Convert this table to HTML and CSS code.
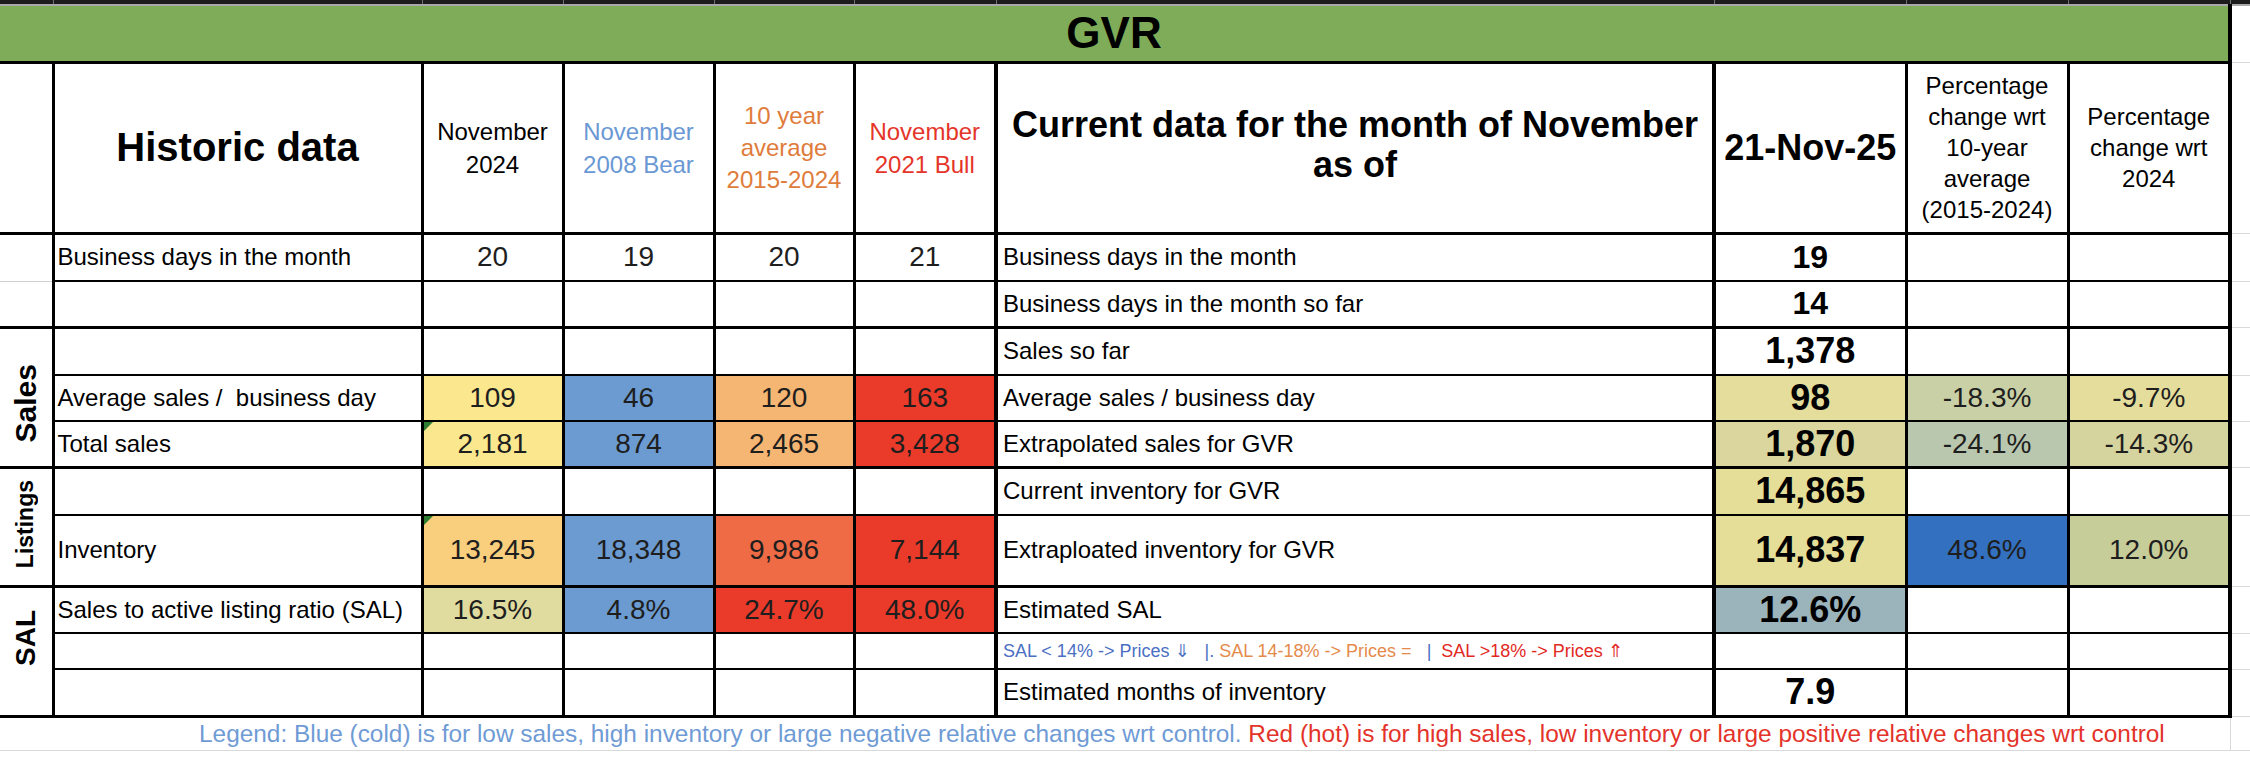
FILE: index.html
```html
<!DOCTYPE html>
<html lang="en">
<head>
<meta charset="utf-8">
<title>GVR</title>
<link rel="stylesheet" href="styles.css">
</head>
<body>
<table class="sheet">
  <colgroup>
    <col class="w0"><col class="w1"><col class="w2"><col class="w3"><col class="w4"><col class="w5"><col class="w6"><col class="w7"><col class="w8"><col class="w9"><col class="w10">
  </colgroup>
  <tr class="strip">
    <td></td><td></td><td></td><td></td><td></td><td></td><td></td><td></td><td></td><td></td><td></td>
  </tr>
  <tr class="title">
    <td colspan="10" class="gvr">GVR</td><td class="x"></td>
  </tr>
  <tr class="head">
    <td class="c"></td>
    <td class="c h-big">Historic data</td>
    <td class="c h-sm">November<br>2024</td>
    <td class="c h-sm t-blue">November<br>2008 Bear</td>
    <td class="c h-sm h-avg t-orange">10 year<br>average<br>2015-2024</td>
    <td class="c h-sm t-red sep">November<br>2021 Bull</td>
    <td class="c h-cur sep">Current data for the month of November<br>as of</td>
    <td class="c h-date">21-Nov-25</td>
    <td class="c h-pct">Percentage<br>change wrt<br>10-year<br>average<br>(2015-2024)</td>
    <td class="c h-pct last">Percentage<br>change wrt<br>2024</td>
    <td class="x"></td>
  </tr>
  <tr class="r1 thin">
    <td class="c gridb"></td>
    <td class="c lab">Business days in the month</td>
    <td class="c num">20</td>
    <td class="c num">19</td>
    <td class="c num">20</td>
    <td class="c num sep">21</td>
    <td class="c lab cur sep">Business days in the month</td>
    <td class="c val mid">19</td>
    <td class="c"></td>
    <td class="c last"></td>
    <td class="x"></td>
  </tr>
  <tr class="r2 thick">
    <td class="c"></td>
    <td class="c lab"></td>
    <td class="c"></td>
    <td class="c"></td>
    <td class="c"></td>
    <td class="c sep"></td>
    <td class="c lab cur sep">Business days in the month so far</td>
    <td class="c val mid">14</td>
    <td class="c"></td>
    <td class="c last"></td>
    <td class="x"></td>
  </tr>
  <tr class="r3 thin">
    <td class="c vlab v-sales-cell thickb" rowspan="3"><span class="v-sales">Sales</span></td>
    <td class="c lab"></td>
    <td class="c"></td>
    <td class="c"></td>
    <td class="c"></td>
    <td class="c sep"></td>
    <td class="c lab cur sep">Sales so far</td>
    <td class="c val">1,378</td>
    <td class="c"></td>
    <td class="c last"></td>
    <td class="x"></td>
  </tr>
  <tr class="r4 thin">
    <td class="c lab">Average sales /&nbsp; business day</td>
    <td class="c num bg-yellow">109</td>
    <td class="c num bg-blue">46</td>
    <td class="c num bg-orange">120</td>
    <td class="c num bg-red sep">163</td>
    <td class="c lab cur sep">Average sales / business day</td>
    <td class="c val bg-k1">98</td>
    <td class="c num bg-sage">-18.3%</td>
    <td class="c num bg-k1 last">-9.7%</td>
    <td class="x"></td>
  </tr>
  <tr class="r5 thick">
    <td class="c lab">Total sales</td>
    <td class="c num bg-yellow flag">2,181</td>
    <td class="c num bg-blue">874</td>
    <td class="c num bg-orange">2,465</td>
    <td class="c num bg-red sep">3,428</td>
    <td class="c lab cur sep">Extrapolated sales for GVR</td>
    <td class="c val bg-k2">1,870</td>
    <td class="c num bg-sage2">-24.1%</td>
    <td class="c num bg-k3 last">-14.3%</td>
    <td class="x"></td>
  </tr>
  <tr class="r6 thin">
    <td class="c vlab thickb" rowspan="2"><span class="v-list">Listings</span></td>
    <td class="c lab"></td>
    <td class="c"></td>
    <td class="c"></td>
    <td class="c"></td>
    <td class="c sep"></td>
    <td class="c lab cur sep">Current inventory for GVR</td>
    <td class="c val bg-k4">14,865</td>
    <td class="c"></td>
    <td class="c last"></td>
    <td class="x"></td>
  </tr>
  <tr class="r7 thick">
    <td class="c lab">Inventory</td>
    <td class="c num bg-lorange flag">13,245</td>
    <td class="c num bg-blue">18,348</td>
    <td class="c num bg-ored">9,986</td>
    <td class="c num bg-red sep">7,144</td>
    <td class="c lab cur sep">Extraploated inventory for GVR</td>
    <td class="c val bg-k4">14,837</td>
    <td class="c num bg-dblue">48.6%</td>
    <td class="c num bg-olive last">12.0%</td>
    <td class="x"></td>
  </tr>
  <tr class="r8 thin">
    <td class="c vlab v-sal-cell thickb" rowspan="3"><span class="v-sal">SAL</span></td>
    <td class="c lab">Sales to active listing ratio (SAL)</td>
    <td class="c num bg-khaki">16.5%</td>
    <td class="c num bg-blue">4.8%</td>
    <td class="c num bg-red">24.7%</td>
    <td class="c num bg-red sep">48.0%</td>
    <td class="c lab cur sep">Estimated SAL</td>
    <td class="c val bg-grey">12.6%</td>
    <td class="c"></td>
    <td class="c last"></td>
    <td class="x"></td>
  </tr>
  <tr class="r9 thin">
    <td class="c lab"></td>
    <td class="c"></td>
    <td class="c"></td>
    <td class="c"></td>
    <td class="c sep"></td>
    <td class="c lab cur sep sal-key"><span class="k-blue">SAL &lt; 14% -&gt; Prices ⇓   |. </span><span class="k-orange">SAL 14-18% -&gt; Prices =  </span><span class="k-blue"> |  </span><span class="k-red">SAL &gt;18% -&gt; Prices ⇑</span></td>
    <td class="c"></td>
    <td class="c"></td>
    <td class="c last"></td>
    <td class="x"></td>
  </tr>
  <tr class="r10 thick">
    <td class="c lab"></td>
    <td class="c"></td>
    <td class="c"></td>
    <td class="c"></td>
    <td class="c sep"></td>
    <td class="c lab cur sep">Estimated months of inventory</td>
    <td class="c val">7.9</td>
    <td class="c"></td>
    <td class="c last"></td>
    <td class="x"></td>
  </tr>
  <tr class="legend">
    <td colspan="10" class="legend-cell"><span class="lg-blue">Legend: Blue (cold) is for low sales, high inventory or large negative relative changes wrt control.</span> <span class="lg-red">Red (hot) is for high sales, low inventory or large positive relative changes wrt control</span></td>
    <td class="x"></td>
  </tr>
  <tr class="tail">
    <td class="g"></td><td class="g"></td><td class="g"></td><td class="g"></td><td class="g"></td><td class="g"></td><td class="g"></td><td class="g"></td><td class="g"></td><td class="g"></td><td></td>
  </tr>
</table>
</body>
</html>
```

FILE: styles.css
```css
html, body {
  margin: 0;
  padding: 0;
  background: #ffffff;
}

body {
  width: 2250px;
  height: 764px;
  overflow: hidden;
  font-family: "Liberation Sans", Arial, Helvetica, "DejaVu Sans", sans-serif;
  color: #000;
}

.sheet {
  border-collapse: collapse;
  table-layout: fixed;
  width: 2250px;
}

.sheet td {
  padding: 0;
  border: 0;
  vertical-align: middle;
  text-align: center;
  white-space: nowrap;
  overflow: hidden;
}

/* column widths */
.w0 { width: 53px; }
.w1 { width: 369px; }
.w2 { width: 141px; }
.w3 { width: 151px; }
.w4 { width: 140px; }
.w5 { width: 142px; }
.w6 { width: 718px; }
.w7 { width: 192px; }
.w8 { width: 162px; }
.w9 { width: 162px; }
.w10 { width: 20px; }

/* row heights */
.strip { height: 5px; }
.title { height: 57px; }
.head { height: 171px; }
.r1 { height: 48px; }
.r2 { height: 46px; }
.r3 { height: 48px; }
.r4 { height: 46px; }
.r5 { height: 46px; }
.r6 { height: 48px; }
.r7 { height: 71px; }
.r8 { height: 47px; }
.r9 { height: 36px; }
.r10 { height: 47px; }
.legend { height: 34px; }
.tail { height: 20px; }

/* top dark spreadsheet strip */
.strip td {
  background: #1c1c1c;
  border-right: 1px solid #707070;
  border-bottom: 2px solid #a9a9a9;
}

/* title */
.gvr {
  background: #7eac59;
  font-size: 44px;
  font-weight: bold;
  border-right: 4px solid #000 !important;
  border-bottom: 3px solid #000 !important;
}

.x {
  border-bottom: 1px solid #d9d9d9 !important;
}

/* table cells */
.sheet td.c { border-right: 3px solid #000; }
.sheet td.sep { border-right: 4px solid #000; }
.sheet td.last { border-right: 4px solid #000; }

.head td.c { border-bottom: 3px solid #000; }
.thin td.c { border-bottom: 2px solid #000; }
.thick td.c { border-bottom: 3px solid #000; }
.sheet td.gridb { border-bottom: 1px solid #d0d0d0; }
.sheet td.thickb { border-bottom: 3px solid #000; }

/* header texts */
.h-big {
  font-size: 40px;
  font-weight: bold;
}
.h-sm {
  font-size: 24px;
  line-height: 33px;
}
.h-avg { line-height: 32px; }
.h-cur {
  font-size: 36px;
  font-weight: bold;
  line-height: 40px;
  padding-bottom: 6px !important;
}
.h-date {
  font-size: 36px;
  font-weight: bold;
}
.h-pct {
  font-size: 24px;
  line-height: 31px;
}

.t-blue { color: #6a98d4; }
.t-orange { color: #e07c3b; }
.t-red { color: #e5352a; }

/* body texts */
.sheet td.lab {
  text-align: left;
  font-size: 24px;
  padding-left: 3px;
}
.sheet td.cur { padding-left: 5px; }
.num {
  font-size: 28px;
  color: #1e1e1e;
}
.val {
  font-size: 36px;
  font-weight: bold;
}
.val.mid { font-size: 32px; }

.sal-key {
  font-size: 18px !important;
  white-space: pre !important;
}
.k-blue { color: #4b6fc3; }
.k-orange { color: #e48b4c; }
.k-red { color: #e2291f; }

/* vertical group labels */
.vlab span {
  display: inline-block;
  writing-mode: vertical-rl;
  transform: rotate(180deg);
  font-weight: bold;
}
.sheet td.v-sales-cell { padding-top: 16px; }
.sheet td.v-sal-cell { padding-bottom: 22px; }
.v-sales { font-size: 30px; }
.v-list { font-size: 23px; }
.v-sal { font-size: 28px; }

/* fills */
.bg-yellow { background: #fbe88e; }
.bg-blue { background: #6b9bd1; }
.bg-orange { background: #f5b573; }
.bg-red { background: #e93a2a; }
.bg-lorange { background: #f9ce7d; }
.bg-ored { background: #ee6b46; }
.bg-khaki { background: #e0dca0; }
.bg-k1 { background: #e4dd9b; }
.bg-k2 { background: #dad69e; }
.bg-k3 { background: #d5d49f; }
.bg-k4 { background: #e5de98; }
.bg-sage { background: #c9d0a6; }
.bg-sage2 { background: #b9c7ae; }
.bg-dblue { background: #3370bf; }
.bg-olive { background: #c6cd99; }
.bg-grey { background: #9bb3bb; }

/* comment indicator triangle */
.flag { position: relative; }
.flag::before {
  content: "";
  position: absolute;
  left: 0;
  top: 0;
  border-top: 9px solid #2f7d32;
  border-right: 9px solid transparent;
}

/* legend */
.sheet td.legend-cell {
  text-align: left;
  padding-left: 199px;
  font-size: 24.4px;
  border-right: 1px solid #d9d9d9;
  border-bottom: 1px solid #d9d9d9;
}
.lg-blue { color: #6f9bd5; }
.lg-red { color: #e3332a; }

.g { border-right: 1px solid #d9d9d9; }
```
